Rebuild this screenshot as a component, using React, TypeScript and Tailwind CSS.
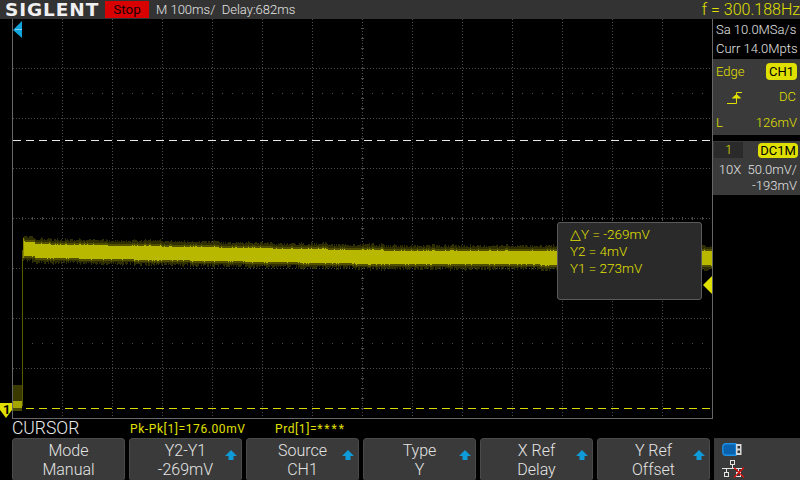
import { useMemo } from 'react';

const softKeys = [
  { top: 'Mode', bottom: 'Manual', arrow: false },
  { top: 'Y2-Y1', bottom: '-269mV', arrow: true },
  { top: 'Source', bottom: 'CH1', arrow: true },
  { top: 'Type', bottom: 'Y', arrow: true },
  { top: 'X Ref', bottom: 'Delay', arrow: true },
  { top: 'Y Ref', bottom: 'Offset', arrow: true },
];

const vLines = Array.from({ length: 13 }, (_, i) => 62 + i * 50);
const hLines = [68, 118, 168, 218, 268, 318, 368];
const ticks = Array.from({ length: 69 }, (_, i) => 22 + i * 10);
const vTicks = Array.from({ length: 39 }, (_, i) => 28 + i * 10);

// repeatable noise, the waveform has to look the same on every load
function noise(seed: number) {
  const v = Math.sin(seed * 127.1) * 43758.5453;
  return v - Math.floor(v);
}

function Waveform() {
  const columns = useMemo(() => {
    const out = [];
    for (let x = 23; x < 712; x++) {
      if (x >= 557 && x < 702) continue;
      const t = (x - 23) / 689;
      const drift = x < 35 ? 0 : 2 + 5.5 * Math.min(1, t * 1.9) + 2 * t;
      const top = 242 + drift - (noise(x) > 0.8 ? 1 : 0);
      const bottom = 255.5 + drift + (noise(x + 500) > 0.85 ? 1 : 0);
      out.push({
        x,
        top,
        bottom,
        fringeTop: top - 4 - Math.floor(noise(x + 900) * 3),
        fringeBottom: bottom + 3 + Math.floor(noise(x + 1300) * 4),
      });
    }
    return out;
  }, []);

  return (
    <g shapeRendering="crispEdges">
      {columns.map(c => (
        <g key={c.x}>
          <rect x={c.x} y={c.fringeTop} width="1" height={c.fringeBottom - c.fringeTop} fill="#2e2e00" />
          <rect x={c.x} y={c.top - 2} width="1" height={c.bottom - c.top + 4} fill="#505000" />
          <rect x={c.x} y={c.top} width="1" height={c.bottom - c.top} fill="#b8b800" />
        </g>
      ))}
      <rect x="22" y="250" width="1" height="156" fill="#5a5a00" />
      <rect x="23" y="238" width="1" height="20" fill="#8a8a00" />
      <rect x="13" y="385" width="9" height="17" fill="#3a3a00" />
      <rect x="13" y="401" width="9" height="7" fill="#a5a500" />
      <rect x="13" y="408" width="9" height="3" fill="#4a4a00" />
    </g>
  );
}

function PlotDrawing() {
  return (
    <svg width="713" height="400" viewBox="0 19 713 400" className="block">
      <g stroke="#4d4d4d" strokeWidth="1" strokeDasharray="1 2">
        {vLines.map(x => (
          <line key={x} x1={x + 0.5} y1="19" x2={x + 0.5} y2="418" />
        ))}
        {hLines.map(y => (
          <line key={y} x1="13" y1={y + 0.5} x2="712" y2={y + 0.5} />
        ))}
      </g>
      <g fill="#4d4d4d" shapeRendering="crispEdges">
        {ticks.map(x => (
          <g key={x}>
            <rect x={x} y="217" width="1" height="3" />
            <rect x={x} y="93" width="1" height="1" />
            <rect x={x} y="343" width="1" height="1" />
          </g>
        ))}
        {vTicks.map(y => (
          <rect key={y} x="361" y={y} width="3" height="1" />
        ))}
      </g>
      <Waveform />
      <line x1="13" y1="140.5" x2="712" y2="140.5" stroke="#e8e8e8" strokeDasharray="8 5" />
      <line x1="26" y1="408.5" x2="712" y2="408.5" stroke="#d9d900" strokeDasharray="8 5" />
      <g fill="none" stroke="#666666" shapeRendering="crispEdges">
        <path d="M12.5 19V418.5H712.5V19" />
      </g>
      <polygon points="13,30 22,21 22,38" fill="#10a5dd" />
      <rect x="15" y="29" width="7" height="1" fill="#7fd4f2" />
      <polygon points="0,403 12,403 12,410 6,418 0,410" fill="#e0e000" />
      <polygon points="703,285 712,276 712,294" fill="#e0e000" />
    </svg>
  );
}

function UpArrow() {
  return (
    <svg width="12" height="10" viewBox="0 0 12 10" className="block">
      <path d="M6 0L12 6H8.5V10H3.5V6H0Z" fill="#0f9bd8" />
    </svg>
  );
}

function EdgeIcon() {
  return (
    <svg width="16" height="13" viewBox="0 0 16 13" className="block" fill="none" stroke="#e0e000">
      <path d="M0 12.5H9.5V1.5H15" />
      <path d="M5.5 7L9.5 3.5L13.5 7Z" fill="#e0e000" />
    </svg>
  );
}

function UsbIcon() {
  return (
    <svg width="20" height="13" viewBox="0 0 20 13" className="block">
      <path d="M4 .8H14V12.2H4Q.8 12.2.8 9V4Q.8.8 4 .8Z" fill="#0b62ad" stroke="#1b8fe6" strokeWidth="1.4" />
      <rect x="14" y="1" width="5.5" height="11" fill="#d8d8d8" />
      <rect x="15.5" y="3" width="2.5" height="2.5" fill="#333" />
      <rect x="15.5" y="7.5" width="2.5" height="2.5" fill="#333" />
    </svg>
  );
}

function NetworkIcon() {
  return (
    <svg width="23" height="18" viewBox="0 0 23 18" className="block" fill="none" stroke="#e4e4e4" shapeRendering="crispEdges">
      <rect x="8.5" y="0.5" width="4" height="4" />
      <path d="M10.5 5V8.5M0 8.5H20M4.5 8.5V12M16.5 8.5V12" />
      <rect x="2.5" y="12.5" width="4" height="4" />
      <rect x="14.5" y="12.5" width="4" height="4" />
      <path d="M12 17.5L22 7.5M12 7.5L22 17.5" stroke="#e01010" strokeWidth="1.2" shapeRendering="auto" />
    </svg>
  );
}

export default function App() {
  return (
    <div className="w-[800px] h-[480px] bg-black overflow-hidden flex flex-col font-['Roboto','Liberation_Sans',sans-serif] font-light text-[#e4e4e4]">
      {/* top bar */}
      <div className="h-[19px] bg-[#333333] flex items-center shrink-0">
        <div className="w-[105px] h-[19px] shrink-0 pl-[5px] font-['DejaVu_Sans',sans-serif] font-bold text-[18.5px] leading-[19px] tracking-[0.9px] whitespace-nowrap text-[#f0f0f0]">
          SIGLENT
        </div>
        <div className="w-[44px] h-[17px] bg-[#d80000] text-[#1a0000] font-normal text-[13.5px] leading-[17px] text-center">
          Stop
        </div>
        <div className="ml-[7px] text-[13px] leading-[17px] whitespace-pre">M 100ms/  Delay:682ms</div>
        <div className="ml-auto text-[#e0e000] text-[16px] leading-[19px] whitespace-nowrap">f = 300.188Hz</div>
      </div>

      {/* scope area */}
      <div className="h-[400px] flex shrink-0">
        <div className="w-[713px] relative shrink-0">
          <PlotDrawing />
          <span className="absolute left-[3px] top-[384px] text-[13px] leading-[14px] font-bold text-black">1</span>
          <div className="absolute left-[557px] top-[203px] w-[145px] h-[78px] bg-[#2a2a2a] border border-[#5a5a5a] rounded-[3px] pl-[12px] pt-[3px] text-[#e0e000] text-[13.5px] leading-[17px]">
            <div>△Y = -269mV</div>
            <div>Y2 = 4mV</div>
            <div>Y1 = 273mV</div>
          </div>
        </div>

        <div className="flex-1 flex flex-col text-[13px]">
          <div className="h-[40px] pl-[3px] flex flex-col justify-around py-[1px] leading-[18px] whitespace-nowrap">
            <div>Sa 10.0MSa/s</div>
            <div>Curr 14.0Mpts</div>
          </div>
          <div className="h-[76px] bg-[#3a3a3a] text-[#e0e000] px-[3px] pt-[3px] flex flex-col justify-between pb-[3px]">
            <div className="flex items-center justify-between">
              <span>Edge</span>
              <span className="bg-[#e0e000] text-black font-normal rounded-[4px] w-[31px] h-[17px] leading-[17px] text-center">CH1</span>
            </div>
            <div className="flex items-center justify-between pl-[11px] pr-[1px]">
              <EdgeIcon />
              <span>DC</span>
            </div>
            <div className="flex items-center justify-between">
              <span>L</span>
              <span>126mV</span>
            </div>
          </div>
          <div className="h-[6px]" />
          <div className="h-[54px] bg-[#3a3a3a] flex flex-col">
            <div className="h-[18px] flex items-center justify-between pl-[1px] pr-[2px]">
              <span className="w-[29px] h-[16px] bg-[#2a2a2a] text-[#e0e000] leading-[16px] text-center">1</span>
              <span className="bg-[#e0e000] text-black font-normal rounded-[4px] w-[40px] h-[15px] leading-[15px] text-center">DC1M</span>
            </div>
            <div className="mt-[3px] text-right pr-[3px] leading-[16px] whitespace-pre">10X  50.0mV/</div>
            <div className="text-right pr-[3px] leading-[16px]">-193mV</div>
          </div>
        </div>
      </div>

      {/* measurement line */}
      <div className="h-[19px] flex items-center shrink-0 pl-[12px]">
        <span className="w-[118px] text-[17.5px] leading-[19px] text-[#ececec]">CURSOR</span>
        <span className="w-[145px] text-[#e0e000] font-normal text-[12px] tracking-[0.6px]">Pk-Pk[1]=176.00mV</span>
        <span className="text-[#e0e000] font-normal text-[12px] tracking-[0.6px]">
          Prd[1]=<span className="tracking-[2px]">****</span>
        </span>
      </div>

      {/* soft keys */}
      <div className="flex-1 flex pl-[12px] gap-[4px]">
        {softKeys.map(key => (
          <div
            key={key.top}
            className="w-[113px] relative bg-[#3a3a3a] border-t border-x border-[#4a4a4a] rounded-t-[4px] rounded-b-[2px] text-center text-[16px] leading-[19px] pt-[2px]"
          >
            <div>{key.top}</div>
            <div>{key.bottom}</div>
            {key.arrow && (
              <div className="absolute right-[4px] top-[11px]">
                <UpArrow />
              </div>
            )}
          </div>
        ))}
        <div className="flex-1 bg-[#3a3a3a] pl-[8px] pt-[5px] flex flex-col gap-[4px]">
          <UsbIcon />
          <NetworkIcon />
        </div>
      </div>
    </div>
  );
}
